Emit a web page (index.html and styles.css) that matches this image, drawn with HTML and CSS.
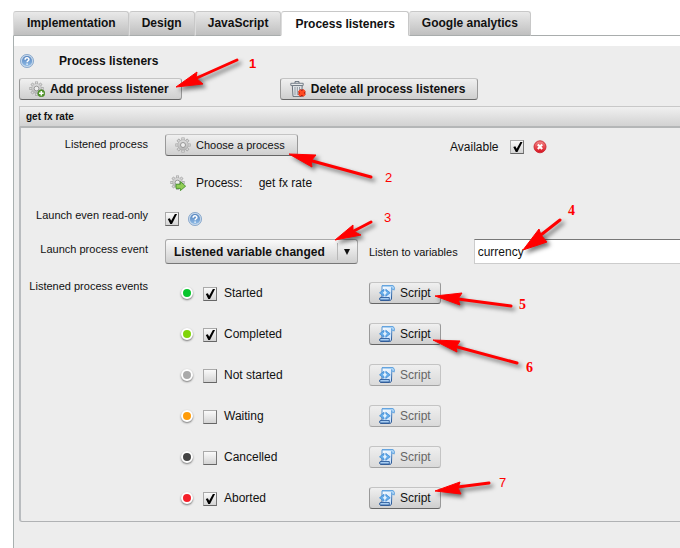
FILE: index.html
```html
<!DOCTYPE html>
<html lang="en">
<head>
<meta charset="utf-8">
<title>Process listeners</title>
<link rel="stylesheet" href="styles.css">
</head>
<body>
<svg class="defs" width="0" height="0" aria-hidden="true">
  <defs>
    <linearGradient id="g-blue" x1="0" y1="0" x2="0" y2="1"><stop offset="0" stop-color="#5683bd"/><stop offset="1" stop-color="#8dbae6"/></linearGradient>
    <linearGradient id="g-gear" x1="0" y1="0" x2="0" y2="1"><stop offset="0" stop-color="#dedede"/><stop offset="1" stop-color="#b4b4b4"/></linearGradient>
    <linearGradient id="g-paper" x1="0" y1="0" x2="1" y2="1"><stop offset="0" stop-color="#fff"/><stop offset="1" stop-color="#c4defa"/></linearGradient>
    <linearGradient id="g-red" x1="0" y1="0" x2="0" y2="1"><stop offset="0" stop-color="#f58a8a"/><stop offset="1" stop-color="#d80f1c"/></linearGradient>
    <linearGradient id="g-edge" x1="0" y1="0" x2="0" y2="1"><stop offset="0" stop-color="#5b9fdf"/><stop offset="1" stop-color="#254f8c"/></linearGradient>
  </defs>
  <symbol id="help" viewBox="0 0 14 14">
    <circle cx="7" cy="7" r="6.6" fill="#c3d6ea" stroke="#7d9fc6" stroke-width=".8"/>
    <circle cx="7" cy="7" r="5.1" fill="url(#g-blue)"/>
    <path d="M5.1 5.7C5.1 3.2 9 3.3 8.9 5.5C8.9 6.8 7.1 6.7 7.1 8.3M7.1 9.4V10.8" fill="none" stroke="#fff" stroke-width="1.5"/>
  </symbol>
  <symbol id="gear" viewBox="0 0 16 16">
    <g stroke="#a3a3a3" stroke-width="3.2"><path d="M8 .4V15.6M.4 8H15.6M2.7 2.7L13.3 13.3M13.3 2.7L2.7 13.3"/></g>
    <g stroke="#d9d9d9" stroke-width="1.7"><path d="M8 1V15M1 8H15M3.1 3.1L12.9 12.9M12.9 3.1L3.1 12.9"/></g>
    <circle cx="8" cy="8" r="5.2" fill="url(#g-gear)" stroke="#ababab" stroke-width=".6"/>
    <circle cx="8" cy="8" r="2.5" fill="#ededed" stroke="#8f8f8f" stroke-width=".9"/>
  </symbol>
  <symbol id="gear-add" viewBox="0 0 16 16">
    <use href="#gear" width="15" height="15"/>
    <circle cx="12.3" cy="12.3" r="3.5" fill="#549a2d" stroke="#3f7d1e" stroke-width=".6"/>
    <path d="M12.3 10V14.6M10 12.3H14.6" stroke="#fff" stroke-width="1.5"/>
  </symbol>
  <symbol id="gear-go" viewBox="0 0 16 16">
    <use href="#gear" width="15" height="15"/>
    <path d="M6 9.2H10.4V6.6L15.6 11.2L10.4 15.6V13.4H6Z" fill="#91cd55" stroke="#45902b" stroke-width=".9"/>
  </symbol>
  <symbol id="trash" viewBox="0 0 16 16">
    <path d="M2.3 4.6L3 15.4H11.5L12.2 4.6Z" fill="#e4e8ec" stroke="#69717a" stroke-width="1"/>
    <path d="M5 6V14M7.3 6V14M9.6 6V14" stroke="#8c959e" stroke-width="1"/>
    <path d="M.8 2.3H13.2V4.4H.8Z" fill="#f5f7f8" stroke="#66717c" stroke-width=".9"/>
    <path d="M5 2V.6H9V2" fill="none" stroke="#66717c" stroke-width="1"/>
    <path d="M9.4 9.4L14.4 14.4M14.4 9.4L9.4 14.4" stroke="#a51308" stroke-width="4.2"/>
    <path d="M9.2 9.2L14.6 14.6M14.6 9.2L9.2 14.6" stroke="#ff4a22" stroke-width="2.7"/>
  </symbol>
  <symbol id="remove" viewBox="0 0 14 14">
    <circle cx="7" cy="6.8" r="6" fill="url(#g-red)" stroke="#c92630" stroke-width=".9"/>
    <path d="M4.8 4.6L9.2 9M9.2 4.6L4.8 9" stroke="#fff" stroke-width="2.1"/>
  </symbol>
  <symbol id="script" viewBox="0 0 16 16">
    <path d="M3 .8H14L12.8 4.2L12.5 13C12.5 14.8 11.8 15.4 10.8 15.4H1.6C.2 15 .3 12.4 1.8 12.3H3Z" fill="url(#g-paper)" stroke="url(#g-edge)" stroke-width="1"/>
    <path d="M3 .7H13.8C15.8 1 15.6 4.4 15 5.2L14.4 4.2H12.7V2.2" fill="#b7dbf8" stroke="#559bdb" stroke-width=".9"/>
    <path d="M1.8 12.5H10.3V15H1.6C.4 14.8 .4 12.7 1.8 12.5Z" fill="#a8cdf1" stroke="#2d5e9e" stroke-width=".9"/>
    <path d="M5 4.3V11.3L.5 7.8ZM6.8 4.3V11.3L11.2 7.8Z" fill="#68aeea" stroke="#408bd5" stroke-width=".8"/>
    <path d="M5.9 5.6L8 7.8L5.9 10L3.8 7.8Z" fill="#e2f1fe"/>
  </symbol>
</svg>

<nav class="tabs">
  <button class="tab" type="button">Implementation</button>
  <button class="tab" type="button">Design</button>
  <button class="tab" type="button">JavaScript</button>
  <button class="tab tab-active" type="button">Process listeners</button>
  <button class="tab" type="button">Google analytics</button>
</nav>

<main class="panel">
  <header class="heading">
    <svg class="icon-s"><use href="#help"/></svg>
    <h1>Process listeners</h1>
  </header>
  <div class="toolbar">
    <button class="btn btn-strong" type="button"><svg class="icon"><use href="#gear-add"/></svg>Add process listener</button>
    <button class="btn btn-strong" type="button"><svg class="icon"><use href="#trash"/></svg>Delete all process listeners</button>
  </div>

  <section class="listener">
    <h2>get fx rate</h2>
    <div class="form">
      <div class="row">
        <span class="label">Listened process</span>
        <div class="field"><button class="btn btn-small" type="button"><svg class="icon"><use href="#gear"/></svg>Choose a process</button></div>
        <div class="extra availability">
          <label for="available">Available</label>
          <input class="check" type="checkbox" id="available" checked>
          <svg class="icon-s"><use href="#remove"/></svg>
        </div>
      </div>
      <div class="row row-process">
        <div class="field process"><svg class="icon"><use href="#gear-go"/></svg><span>Process:</span><span class="name">get fx rate</span></div>
      </div>
      <div class="row row-readonly">
        <label class="label" for="readonly">Launch even read-only</label>
        <div class="field readonly">
          <input class="check" type="checkbox" id="readonly" checked>
          <svg class="icon-s"><use href="#help"/></svg>
        </div>
      </div>
      <div class="row row-event">
        <label class="label" for="event">Launch process event</label>
        <div class="field">
          <div class="select">
            <select id="event"><option>Listened variable changed</option></select>
          </div>
        </div>
        <div class="extra variables">
          <label for="variables">Listen to variables</label>
          <input type="text" id="variables" value="currency">
        </div>
      </div>
      <div class="row row-events">
        <span class="label">Listened process events</span>
        <div class="events">
          <div class="event"><span class="dot green"></span><input class="check" type="checkbox" id="e1" checked><label for="e1">Started</label><button class="btn btn-script" type="button"><svg class="icon"><use href="#script"/></svg>Script</button></div>
          <div class="event"><span class="dot lime"></span><input class="check" type="checkbox" id="e2" checked><label for="e2">Completed</label><button class="btn btn-script" type="button"><svg class="icon"><use href="#script"/></svg>Script</button></div>
          <div class="event"><span class="dot grey"></span><input class="check" type="checkbox" id="e3"><label for="e3">Not started</label><button class="btn btn-script" type="button" disabled><svg class="icon"><use href="#script"/></svg>Script</button></div>
          <div class="event"><span class="dot orange"></span><input class="check" type="checkbox" id="e4"><label for="e4">Waiting</label><button class="btn btn-script" type="button" disabled><svg class="icon"><use href="#script"/></svg>Script</button></div>
          <div class="event"><span class="dot black"></span><input class="check" type="checkbox" id="e5"><label for="e5">Cancelled</label><button class="btn btn-script" type="button" disabled><svg class="icon"><use href="#script"/></svg>Script</button></div>
          <div class="event"><span class="dot red"></span><input class="check" type="checkbox" id="e6" checked><label for="e6">Aborted</label><button class="btn btn-script" type="button"><svg class="icon"><use href="#script"/></svg>Script</button></div>
        </div>
      </div>
    </div>
  </section>
</main>

<svg class="callouts" width="680" height="548" viewBox="0 0 680 548">
  <g class="arrows">
    <path d="M190 81L237 60"/><path class="head" d="M176 87L197 72L196 78L203 84Z"/>
    <path d="M305 159L371 177"/><path class="head" d="M289 154L316 155L311 161L312 167Z"/>
    <path d="M350 233L371 222"/><path class="head" d="M335 240L353 225L353 231L361 235Z"/>
    <path d="M537 238L560 220"/><path class="head" d="M523 250L539 229L541 235L547 242Z"/>
    <path d="M450 298L511 306"/><path class="head" d="M435 296L462 293L458 299L460 305Z"/>
    <path d="M450 345L517 363"/><path class="head" d="M433 340L460 341L456 347L457 352Z"/>
    <path d="M450 488L489 483"/><path class="head" d="M435 491L460 482L458 488L461 494Z"/>
  </g>
  <g class="numbers">
    <text class="bold" x="249" y="68">1</text>
    <text x="385" y="182">2</text>
    <text x="384" y="222">3</text>
    <text class="serif" x="568" y="215">4</text>
    <text class="serif" x="519" y="309">5</text>
    <text class="serif" x="526" y="372">6</text>
    <text x="499" y="487">7</text>
  </g>
</svg>
</body>
</html>
```
FILE: styles.css
```css
* { box-sizing: border-box; }
body {
  margin: 0;
  padding: 11px 0 0 13px;
  min-height: 100vh;
  display: flex;
  flex-direction: column;
  position: relative;
  overflow-x: hidden;
  background: #fff;
  color: #111;
  font: 12px/16px "Liberation Sans", Arial, sans-serif;
}
button, select, input { font: inherit; color: inherit; margin: 0; }
svg { display: block; flex: none; }
.defs { position: absolute; }
.icon { width: 16px; height: 16px; }
.icon-s { width: 14px; height: 14px; }

.tabs { display: flex; height: 25px; border-bottom: 1px solid #a9adad; }
.tab {
  height: 25px;
  padding: 0 12px 2px;
  border: 1px solid #c8c8c8;
  border-left-color: #dcdcdc;
  border-bottom-color: #a9adad;
  border-radius: 3px 3px 0 0;
  background: linear-gradient(#e9e9e9, #bfbfbf);
  font-weight: bold;
}
.tab:first-child { padding-left: 13px; }
.tab-active { background: #fff; border-bottom-color: #fff; padding: 1px 13px 0; }

.panel {
  flex: 1;
  padding: 8px 0 24px 5px;
  border-left: 1px solid #a9b0b0;
  background: linear-gradient(#fff 10px, #ededed 10px);
  padding-top: 18px;
}
.heading { display: flex; align-items: center; gap: 25px; padding-left: 1px; height: 14px; }
h1, h2 { margin: 0; font-size: 12px; }
.toolbar { display: flex; gap: 98px; margin-top: 10px; }
.btn {
  display: inline-flex;
  align-items: center;
  gap: 5px;
  height: 22px;
  padding: 0 12px 0 9px;
  border: 1px solid #999;
  border-top-color: #c4c4c4;
  border-bottom-color: #666;
  border-radius: 3px;
  background: linear-gradient(#f0f0f0, #cfcfcf);
  white-space: nowrap;
}
.btn-strong { font-weight: bold; }
.btn-small { font-size: 11px; }
.btn-script { padding-right: 9px; }
.btn:disabled { border-color: #c4c4c4; border-bottom-color: #a4a4a4; background: linear-gradient(#efefef, #dadada); color: #666; }

.listener { margin-top: 6px; }
h2 {
  height: 22px;
  padding-left: 6px;
  border: 1px solid #c8c8c8;
  border-right: 0;
  border-bottom: 2px solid #b4b6b7;
  background: linear-gradient(#f0f0f0, #d2d2d2);
  font-size: 10px;
  line-height: 20px;
}
.form {
  border-left: 2px solid #b9bcbf;
  border-bottom: 1px solid #b0b2b4;
  border-radius: 0 0 0 3px;
  padding: 6px 0 12px;
}
.row { display: grid; grid-template-columns: 144px 204px 1fr; align-items: start; }
.label { padding: 2px 17px 0 0; font-size: 11px; text-align: right; white-space: nowrap; }
.field { grid-column: 2; }
.availability { display: flex; align-items: center; padding: 5px 0 0 81px; }
.availability .check { margin: 0 9px 0 12px; }
.row-process { margin-top: 18px; }
.process { display: flex; align-items: center; gap: 10px; padding-left: 5px; }
.process .name { padding-left: 6px; }
.row-readonly { margin-top: 16px; }
.row-readonly .label { padding-top: 0; }
.readonly { display: flex; align-items: center; gap: 9px; padding-top: 5px; }
.row-event { margin-top: 13px; }
.select { position: relative; width: 193px; }
.select::before {
  content: "";
  position: absolute;
  top: 4px;
  bottom: 4px;
  right: 20px;
  border-left: 1px solid #b8b8b8;
}
.select::after {
  content: "";
  position: absolute;
  top: 10px;
  right: 8px;
  border: 3px solid transparent;
  border-top: 6px solid #111;
  border-bottom: 0;
  pointer-events: none;
}
select {
  appearance: none;
  display: block;
  width: 100%;
  height: 25px;
  padding: 0 24px 0 8px;
  border: 1px solid #aaa;
  border-bottom-color: #777;
  border-radius: 3px;
  background: linear-gradient(#fafafa, #cfcfcf);
  font-weight: bold;
}
.variables { display: flex; align-items: center; gap: 16px; min-width: 0; }
.variables label { font-size: 11px; white-space: nowrap; }
.variables input {
  flex: 1;
  min-width: 0;
  height: 25px;
  padding: 0 3px;
  border: 1px solid #ccc;
  border-top-color: #777;
  border-right: 0;
  border-radius: 0;
  background: #fff;
}
.row-events { grid-template-columns: 144px 1fr; margin-top: 18px; }
.row-events .label { padding-top: 0; margin-top: -4px; }
.events { display: grid; gap: 19px; }
.event { display: grid; grid-template-columns: 38px 21px 145px max-content; align-items: center; height: 22px; }
.event .check { margin-top: 2px; }
.dot {
  width: 12px;
  height: 12px;
  margin-left: 16px;
  border: 2px solid #fff;
  border-radius: 50%;
  box-shadow: 0 1px 2px #777;
}
.green { background: #08c52d; }
.lime { background: #80d40a; }
.grey { background: #aaa; }
.orange { background: #ff9c09; }
.black { background: #444; }
.red { background: #f5202a; }

.check {
  appearance: none;
  flex: none;
  width: 14px;
  height: 14px;
  border: 1px solid #aaa;
  border-right-color: #777;
  border-bottom-color: #666;
  background: linear-gradient(#fafafa, #d4d4d4);
}
.check:checked::before {
  content: "";
  display: block;
  width: 12px;
  height: 12px;
  background: #000;
  clip-path: polygon(15% 50%, 32% 44%, 43% 64%, 74% 8%, 92% 8%, 50% 91%, 36% 91%);
}

.callouts { position: absolute; top: 0; left: 0; pointer-events: none; }
.arrows { stroke: #f00; stroke-width: 3; stroke-linecap: round; fill: #f00; filter: drop-shadow(3px 3px 2px #0008); }
.head { stroke-width: 1; stroke-linecap: butt; }
.numbers { fill: #f00; font-size: 13px; }
.bold { font-weight: bold; }
.serif { font: bold 14px "Liberation Serif", serif; }
```
